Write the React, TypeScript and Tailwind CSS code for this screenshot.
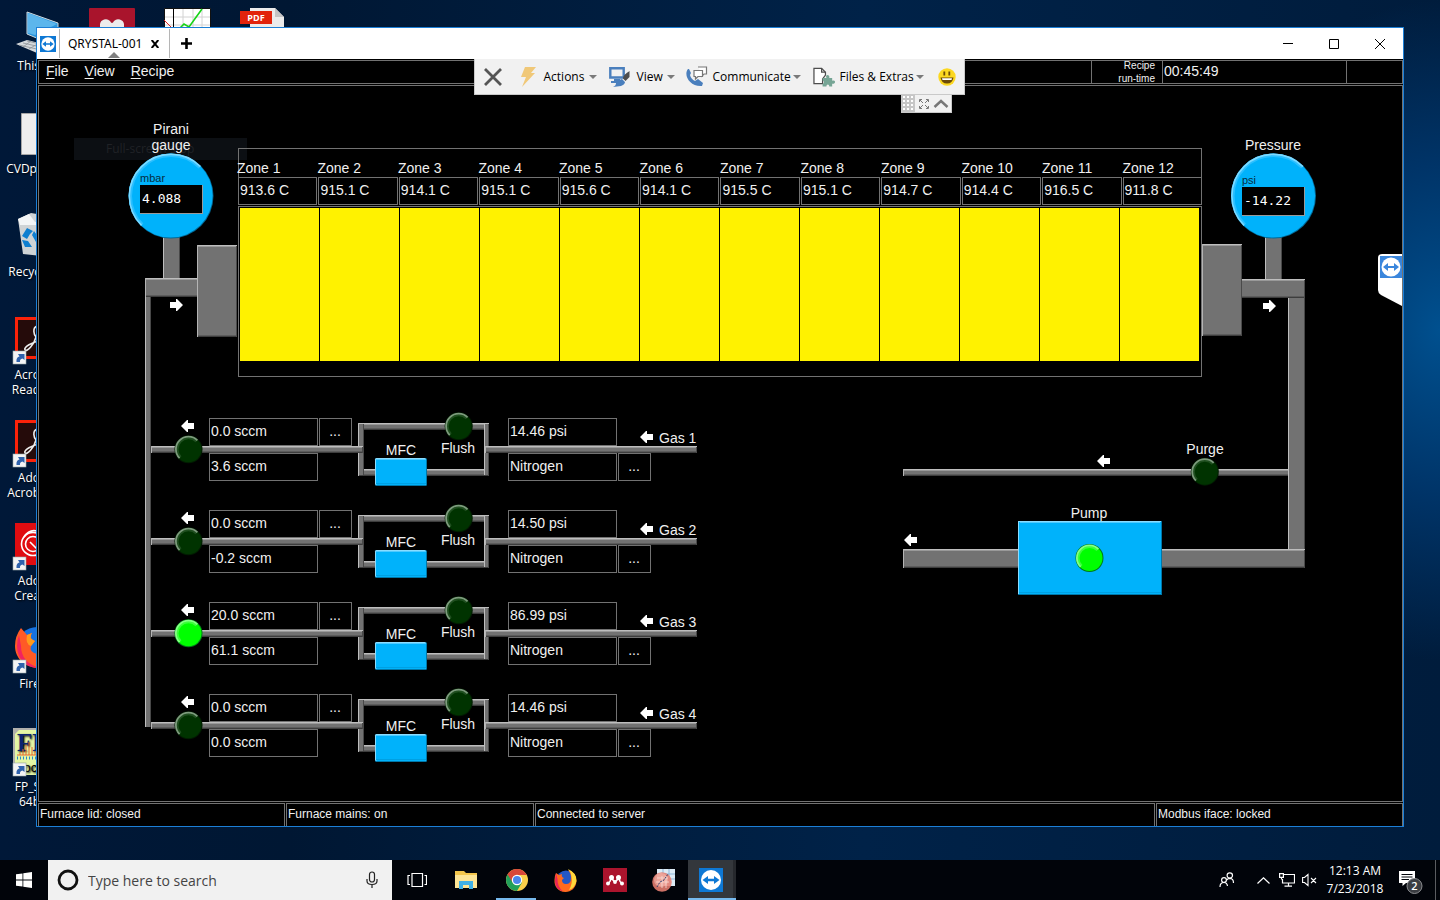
import React from "react";

const ui = "font-['Open_Sans','Noto_Sans',sans-serif]";

/* ---------- Mimic drawing primitives ---------- */

type Box = { x: number; y: number; w: number; h: number };

function Pipe({ x, y, w, h }: Box) {
  return (
    <g shapeRendering="crispEdges">
      <rect x={x} y={y} width={w} height={h} fill="#727272" />
      <rect x={x} y={y + h - 2} width={w} height={1} fill="#5c5c5c" />
      <rect x={x} y={y + h - 1} width={w} height={1} fill="#3d3d3d" />
      <rect x={x + w - 1} y={y} width={1} height={h} fill="#4a4a4a" />
      <rect x={x} y={y + 1} width={w - 1} height={1} fill="#999999" />
      <rect x={x} y={y} width={w} height={1} fill="#bebebe" />
      <rect x={x} y={y} width={1} height={h} fill="#b4b4b4" />
    </g>
  );
}

function Riser({ x, y, w, h }: Box) {
  return (
    <g shapeRendering="crispEdges">
      <rect x={x} y={y} width={w} height={h} fill="#727272" />
      <rect x={x} y={y} width={1} height={h} fill="#bebebe" />
      <rect x={x + w - 1} y={y} width={1} height={h} fill="#484848" />
    </g>
  );
}

function BluePanel({ x, y, w, h, r }: Box & { r: number }) {
  return (
    <g>
      <rect x={x} y={y} width={w} height={h} rx={r} fill="#0077a8" />
      <rect x={x} y={y} width={w - 1} height={h - 1} rx={r} fill="#8adcff" />
      <rect x={x + 1} y={y + 1} width={w - 2} height={h - 2} rx={r} fill="#00b2fb" />
      <rect x={x + 2} y={y + 1} width={w - 4} height={1} fill="#4fcaff" />
      <rect x={x + 1} y={y + h - 3} width={w - 2} height={1} fill="#00a0e2" />
    </g>
  );
}

/* Upper-left half of a circle's rim, from lower left to upper right. */
function Rim({ cx, cy, r, color, width }: { cx: number; cy: number; r: number; color: string; width: number }) {
  const k = r * Math.SQRT1_2;
  return (
    <path
      d={`M${cx - k} ${cy + k} A${r} ${r} 0 0 1 ${cx + k} ${cy - k}`}
      fill="none"
      stroke={color}
      strokeWidth={width}
    />
  );
}

function Lamp({ cx, cy, on = false }: { cx: number; cy: number; on?: boolean }) {
  return (
    <g>
      <circle cx={cx} cy={cy} r={14} fill={on ? "#007a18" : "#001c00"} />
      <circle cx={cx} cy={cy} r={13} fill={on ? "#00ff00" : "#003300"} />
      <Rim cx={cx} cy={cy} r={11} color={on ? "#3cff3c" : "#1f4f1f"} width={2} />
      <Rim cx={cx} cy={cy} r={12.6} color={on ? "#86ff86" : "#7d9a7d"} width={1.8} />
    </g>
  );
}

function Gauge({ cx, cy }: { cx: number; cy: number }) {
  return (
    <g>
      <circle cx={cx} cy={cy} r={42.5} fill="#006a98" />
      <circle cx={cx - 0.4} cy={cy - 0.4} r={42} fill="#00b2fb" />
      <Rim cx={cx} cy={cy} r={40} color="#2abfff" width={2} />
      <Rim cx={cx} cy={cy} r={41.6} color="#7ed9ff" width={1.6} />
    </g>
  );
}

function Arrow({ x, y, right = false }: { x: number; y: number; right?: boolean }) {
  const d = right
    ? `M${x} ${y + 3}h6v-3h1l6 6l-6 6h-1v-3h-6z`
    : `M${x + 13} ${y + 3}h-6v-3h-1l-6 6l6 6h1v-3h6z`;
  return <path d={d} fill="#ffffff" />;
}

/* ---------- Furnace ---------- */

const zones = [
  "913.6 C", "915.1 C", "914.1 C", "915.1 C", "915.6 C", "914.1 C",
  "915.5 C", "915.1 C", "914.7 C", "914.4 C", "916.5 C", "911.8 C",
];

function Furnace() {
  return (
    <section aria-label="Furnace" className="absolute left-[199px] top-[62px] flex h-[229px] w-[964px] flex-col">
      <div className="h-[29px] border-x border-t border-[#727272] pt-[11px]">
        <div className="-mx-[2px] grid grid-cols-12 leading-[17px]">
          {zones.map((_, i) => (
            <span key={i}>Zone {i + 1}</span>
          ))}
        </div>
      </div>
      <div className="mb-px grid h-7 grid-cols-12 gap-px">
        {zones.map((t, i) => (
          <output key={i} aria-label={`Zone ${i + 1}`} className="border border-[#727272] pl-px leading-[25px]">
            {t}
          </output>
        ))}
      </div>
      <div className="flex-1 border border-[#727272] px-px pt-px">
        <div className="grid h-[153px] grid-cols-12">
          {zones.map((_, i) => (
            <div key={i} className="border-r border-black bg-[#fff200]" />
          ))}
        </div>
      </div>
    </section>
  );
}

/* ---------- Gas lines ---------- */

type Gas = { name: string; set: string; flow: string; psi: string; open?: boolean };

const gases: Gas[] = [
  { name: "Gas 1", set: "0.0 sccm", flow: "3.6 sccm", psi: "14.46 psi" },
  { name: "Gas 2", set: "0.0 sccm", flow: "-0.2 sccm", psi: "14.50 psi" },
  { name: "Gas 3", set: "20.0 sccm", flow: "61.1 sccm", psi: "86.99 psi", open: true },
  { name: "Gas 4", set: "0.0 sccm", flow: "0.0 sccm", psi: "14.46 psi" },
];

const readField = "h-7 w-[109px] border border-[#727272] bg-black pl-px text-[14px] leading-[25px] text-[#f0f0f0]";
const editField = "h-7 w-[109px] border border-[#727272] bg-black pb-[2px] pl-px text-[14px] text-[#f0f0f0]";
const more = "h-7 w-[33px] border border-[#727272] bg-black pb-[2px] pr-px text-[14px] text-[#f0f0f0]";

function GasLine({ g }: { g: Gas }) {
  return (
    <section aria-label={g.name} className="relative h-[92px]">
      <div className="absolute left-16 top-2 grid gap-[7px]">
        <div className="flex gap-px">
          <input aria-label={`${g.name} set point`} className={editField} defaultValue={g.set} />
          <button className={more}>...</button>
        </div>
        <output aria-label={`${g.name} flow`} className={readField}>{g.flow}</output>
      </div>
      <div className="absolute left-[363px] top-2 grid gap-[7px]">
        <output aria-label={`${g.name} pressure`} className={readField}>{g.psi}</output>
        <div className="flex gap-px">
          <input aria-label={`${g.name} type`} className={editField} defaultValue="Nitrogen" />
          <button className={more}>...</button>
        </div>
      </div>
      <svg className="absolute left-0 top-0 h-[92px] w-[560px]" viewBox="145 410 560 92" aria-hidden="true">
        <Pipe x={358} y={423} w={131} h={7} />
        <Pipe x={358} y={469} w={131} h={7} />
        <Riser x={358} y={424} w={6} h={51} />
        <Riser x={484} y={424} w={5} h={51} />
        <Pipe x={151} y={446} w={212} h={7} />
        <Pipe x={485} y={446} w={212} h={7} />
        <BluePanel x={375} y={458} w={52} h={28} r={1.5} />
        <Lamp cx={458.7} cy={426.3} />
        <Lamp cx={188.5} cy={449.3} on={g.open} />
        <Arrow x={181} y={420} />
        <Arrow x={640} y={431} />
      </svg>
      <span className="absolute left-[230px] top-8 w-[52px] text-center leading-4">MFC</span>
      <span className="absolute left-[287px] top-[30px] w-[52px] text-center leading-4">Flush</span>
      <span className="absolute left-[514px] top-5 leading-4">{g.name}</span>
    </section>
  );
}

function Readout({ unit, value }: { unit: string; value: string }) {
  return (
    <label className="block w-[63px] text-[11px] leading-[13px] text-[#062c40]">
      {unit}
      <output className="block h-[29px] border-b border-r border-[#9a9a9a] bg-black pl-[2px] font-['DejaVu_Sans_Mono',monospace] text-[13px] leading-7 text-white">
        {value}
      </output>
    </label>
  );
}

function Mimic() {
  return (
    <main className="relative min-h-0 flex-1 overflow-hidden border border-[#727272] text-[14px] text-[#f0f0f0]">
      <div className="absolute left-[35px] top-[52px] h-[22px] w-[173px] bg-[#0c0f13] pl-8 text-[12px] leading-[22px] text-[#202226]">
        <span className={ui}>Full-screen stop</span>
      </div>
      <svg className="absolute left-0 top-0 h-[714px] w-[1363px]" viewBox="39 86 1363 714" aria-hidden="true">
        <Riser x={163} y={236} w={17} h={43} />
        <Gauge cx={171} cy={196} />
        <Riser x={145} y={296} w={6} h={431} />
        <Pipe x={145} y={278} w={53} h={19} />
        <Pipe x={197} y={245} w={40} h={92} />
        <Arrow x={170} y={299} right />
        <Riser x={1265} y={236} w={17} h={44} />
        <Gauge cx={1273.5} cy={196} />
        <Riser x={1288} y={297} w={17} h={253} />
        <Pipe x={1241} y={279} w={64} h={19} />
        <Pipe x={1202} y={244} w={40} h={92} />
        <Arrow x={1263} y={300} right />
        <Pipe x={903} y={469} w={386} h={7} />
        <Riser x={1288} y={460} w={17} h={90} />
        <Lamp cx={1204.8} cy={471.7} />
        <Arrow x={1097} y={455} />
        <Pipe x={903} y={549} w={402} h={19} />
        <BluePanel x={1018} y={521} w={144} h={74} r={0} />
        <Lamp cx={1089.5} cy={558} on />
        <Arrow x={904} y={534} />
      </svg>
      <p className="absolute left-[92px] top-[35px] w-20 text-center leading-4">
        Pirani
        <br />
        gauge
      </p>
      <div className="absolute left-[101px] top-[86px]">
        <Readout unit="mbar" value="4.088" />
      </div>
      <p className="absolute left-[1194px] top-[51px] w-20 text-center leading-4">Pressure</p>
      <div className="absolute left-[1203px] top-[88px]">
        <Readout unit="psi" value="-14.22" />
      </div>
      <Furnace />
      <div className="absolute left-[106px] top-[324px] w-[560px]">
        {gases.map((g) => (
          <GasLine key={g.name} g={g} />
        ))}
      </div>
      <p className="absolute left-[1126px] top-[355px] w-20 text-center leading-4">Purge</p>
      <p className="absolute left-[1010px] top-[419px] w-20 text-center leading-4">Pump</p>
      <button aria-label="Panel" className="absolute right-0 top-[168px] h-[52px] w-6">
        <svg className="h-[52px] w-6" viewBox="0 0 24 52">
          <path d="M4 0H24V52L3 41Q0 39 0 36V4Q0 0 4 0Z" fill="#fff" />
          <rect x="2" y="2" width="22" height="22" fill="#3a86dc" />
          <circle cx="13" cy="13" r="9.5" fill="#fff" />
          <path d="M5 13l5-4v3h6V9l5 4l-5 4v-3h-6v3z" fill="#3a86dc" />
        </svg>
      </button>
    </main>
  );
}

/* ---------- Remote session toolbar ---------- */

function Caret() {
  return (
    <svg className="h-1 w-2" viewBox="0 0 8 4">
      <path d="M0 0h8l-4 4z" fill="#7a7a7a" />
    </svg>
  );
}

function RemoteToolbar() {
  const item = "flex items-center text-[12px] text-black";
  return (
    <div className={`absolute inset-x-0 top-[31px] z-10 flex justify-center pr-[2px] ${ui}`}>
      <div className="relative flex h-9 w-[491px] items-center border border-t-0 border-[#c9c9c9] bg-[#f1f1f1] pl-[9px]">
        <button aria-label="Close session" className="mr-[18px]">
          <svg className="h-[18px] w-[18px]" viewBox="0 0 18 18">
            <path d="M1 1L17 17M17 1L1 17" stroke="#555" strokeWidth="2.8" />
          </svg>
        </button>
        <button className={item}>
          <svg className="mr-[7px] h-5 w-[17px]" viewBox="0 0 17 20">
            <path d="M5 0H16L11 6H15L2 20L6 10H1Z" fill="#f0c878" />
          </svg>
          <span className="w-[45px] text-left">Actions</span>
          <Caret />
        </button>
        <button className={`${item} ml-3`}>
          <svg className="mr-[7px] h-5 w-[21px]" viewBox="0 0 21 20">
            <path d="M1.300 1.300H14.700V10.500H1.300Z" fill="none" stroke="#4a7fbd" strokeWidth="2.400" />
            <path d="M5 12h6v2H5z" fill="#4a7fbd" />
            <path d="M2 14h5l6-2l3 3c0 2-2 3-4 4l-8 1c2-1 3-2 3-4H2z" fill="#4a7fbd" />
            <path d="M20.500 4v6l-4 4-2.500-2.500c0-3 3-5 6.500-7.500z" fill="#4d4d4d" />
          </svg>
          <span className="w-[30px] text-left">View</span>
          <Caret />
        </button>
        <button className={`${item} ml-[10px]`}>
          <svg className="mr-[5px] h-[21px] w-[23px]" viewBox="0 0 23 21">
            <path d="M3 3C-2 9 5 21 17 20L18 17L13 13L10 15Q6 13 5 9L6 7L4 3Z" fill="#4a7fbd" />
            <path d="M13 1H21.5V8H19L17 10V8" fill="#fff" stroke="#777" strokeWidth="1.2" />
            <path d="M9 4.5H17.500V10.500H13L10.500 13V10.500H9Z" fill="#fff" stroke="#777" strokeWidth="1.2" />
          </svg>
          <span className="w-20 text-left">Communicate</span>
          <Caret />
        </button>
        <button className={`${item} ml-3`}>
          <svg className="mr-1 h-5 w-[23px]" viewBox="0 0 24 20">
            <path d="M1 1H9L13 5V8L10 12V17H1Z" fill="#fff" stroke="#4d4d4d" strokeWidth="1.3" />
            <path d="M9 1V5H13" fill="none" stroke="#4d4d4d" strokeWidth="1.3" />
            <path d="M10 11h4c-2-4 4-4 3 0h3v3c4-2 4 4 0 3v3h-3c0-3-3-3-3 0h-4v-3c2 0 2-3 0-3z" fill="#76a595" />
          </svg>
          <span className="w-[76px] whitespace-nowrap text-left">Files &amp; Extras</span>
          <Caret />
        </button>
        <button aria-label="Feedback" className="ml-[14px]">
          <svg className="h-[18px] w-[18px]" viewBox="0 0 18 18">
            <circle cx="9" cy="9" r="8.700" fill="#fcd820" />
            <path d="M6.300 3.500v4M11.300 3.500v4" stroke="#6b4a08" strokeWidth="1.800" />
            <path d="M2.500 9.500H15.500Q14.500 15.500 9 15.500Q3.500 15.500 2.500 9.500Z" fill="#6b4a08" />
            <path d="M4 10.300H14L13.500 12H4.500Z" fill="#fff" />
          </svg>
        </button>
        <div className="absolute right-3 top-9 flex h-[18px] w-[51px] items-center justify-between border border-t-0 border-[#c9c9c9] bg-[#f1f1f1] pr-[2px]">
          <svg className="h-[17px] w-[13px]" viewBox="0 0 13 17">
            <path d="M0 0H13V17H0Z" fill="#c6c6c6" />
            <path d="M1 2h12M1 6h12M1 10h12M1 14h12" stroke="#fff" strokeWidth="2" strokeDasharray="2 2" />
          </svg>
          <svg className="h-[10px] w-[10px]" viewBox="0 0 10 10" fill="none" stroke="#777">
            <path d="M.5 3V.5H3M7 .5H9.500V3M9.500 7V9.500H7M3 9.500H.5V7M1 1L4 4M9 1L6 4M1 9L4 6M9 9L6 6" />
          </svg>
          <svg className="h-[9px] w-4" viewBox="0 0 16 9">
            <path d="M1.500 8L8 2L14.500 8" fill="none" stroke="#777" strokeWidth="2.400" />
          </svg>
        </div>
      </div>
    </div>
  );
}

function ViewerLogo({ className }: { className: string }) {
  return (
    <svg className={className} viewBox="0 0 24 24">
      <rect width="24" height="24" fill="#0e78d4" />
      <circle cx="12" cy="12" r="10" fill="#fff" />
      <path d="M3.500 12L9 8V10.800H15V8L20.500 12L15 16V13.200H9V16Z" fill="#0e78d4" />
    </svg>
  );
}

function AppWindow() {
  return (
    <div className="absolute inset-x-9 bottom-[33px] top-[27px] flex flex-col border border-[#1c7fd6] bg-black font-['Liberation_Sans',Arial,sans-serif]">
      <div className={`flex h-[31px] shrink-0 items-center bg-white text-[12px] text-black ${ui}`}>
        <ViewerLogo className="ml-[3px] h-4 w-4" />
        <div className="relative ml-[3px] flex h-[29px] w-[111px] items-center border-x border-[#b5b5b5] pl-2">
          <span className="w-[74px] whitespace-nowrap font-['Noto_Sans',sans-serif] leading-4">QRYSTAL-001</span>
          <button aria-label="Close tab" className="ml-[9px]">
            <svg className="h-2 w-2" viewBox="0 0 8 8">
              <path d="M.7 0L7.300 8M7.300 0L.7 8" stroke="#000" strokeWidth="2" />
            </svg>
          </button>
          <svg className="absolute bottom-0 left-12 h-[6px] w-3" viewBox="0 0 12 6">
            <path d="M0 6L6 0L12 6Z" fill="#808080" />
          </svg>
        </div>
        <button aria-label="New tab" className="ml-[11px]">
          <svg className="h-[11px] w-[11px]" viewBox="0 0 11 11">
            <path d="M5.500 0V11M0 5.500H11" stroke="#000" strokeWidth="2.600" />
          </svg>
        </button>
        <div className="ml-auto flex items-center gap-9 pr-[18px]">
          <button aria-label="Minimize">
            <svg className="h-[10px] w-[10px]" viewBox="0 0 10 10"><path d="M0 4.500H10" stroke="#000" /></svg>
          </button>
          <button aria-label="Maximize">
            <svg className="h-[10px] w-[10px]" viewBox="0 0 10 10"><path d="M.5 .5H9.500V9.500H.5Z" fill="none" stroke="#000" /></svg>
          </button>
          <button aria-label="Close">
            <svg className="h-[10px] w-[10px]" viewBox="0 0 10 10"><path d="M0 0L10 10M10 0L0 10" stroke="#000" /></svg>
          </button>
        </div>
      </div>

      <RemoteToolbar />

      <div className="flex min-h-0 flex-1 flex-col gap-px pl-px pt-px">
        <header className="flex h-6 shrink-0 border border-[#727272] text-[14px] leading-[21px] text-[#f0f0f0]">
          <nav className="flex gap-4 pb-[2px] pl-[7px]">
            <button><span className="underline underline-offset-2">F</span>ile</button>
            <button><span className="underline underline-offset-2">V</span>iew</button>
            <button><span className="underline underline-offset-2">R</span>ecipe</button>
          </nav>
          <span className="ml-auto w-[71px] border-l border-[#727272] pr-[7px] text-right text-[10px] leading-[13px]">
            <span className="-mt-[2px] block">
              Recipe
              <br />
              run-time
            </span>
          </span>
          <output aria-label="Recipe run-time" className="w-[184px] border-l border-[#727272] pl-px">00:45:49</output>
          <span className="w-[56px] border-l border-[#727272]" />
        </header>
        <Mimic />
        <footer className="flex h-[23px] shrink-0 gap-px text-[12px] leading-[21px] text-[#f0f0f0]">
          <span className="w-[247px] border border-b-0 border-[#727272] pl-px">Furnace lid: closed</span>
          <span className="w-[248px] border border-b-0 border-[#727272] pl-px">Furnace mains: on</span>
          <span className="flex-1 border border-b-0 border-[#727272] pl-px">Connected to server</span>
          <span className="w-[247px] border border-b-0 border-[#727272] pl-px">Modbus iface: locked</span>
        </footer>
      </div>
    </div>
  );
}

/* ---------- Desktop ---------- */

function Shortcut() {
  return (
    <g>
      <rect x="-2" y="34" width="13" height="13" fill="#f4f4f4" stroke="#9aa" strokeWidth=".6" />
      <path d="M1.500 45Q1 40 4.500 39.500L3 37H9.500V43L7.500 41.500Q4.500 42 5 45Z" fill="#2f62ac" />
    </g>
  );
}

function AcrobatArt() {
  return (
    <g>
      <path d="M1.500 1.500H46V40.500H1.500Z" fill="#250b0a" stroke="#fb2209" strokeWidth="3" />
      <path d="M22 9C17 11 19 18 21 20C19 28 12 35 10 33C8 30 18 25 24 24" fill="none" stroke="#eee" strokeWidth="1.600" />
      <Shortcut />
    </g>
  );
}

const desktopIcons: { label: string[]; art: React.ReactNode }[] = [
  {
    label: ["This"],
    art: (
      <g>
        <path d="M12 4L43 15V39L12 26Z" fill="#2a95dc" stroke="#cfd8dd" />
        <path d="M13 5L42 16L20 27L13 25Z" fill="#5cb6ec" />
        <path d="M1 36L12 32L36 38L22 45Z" fill="#d6dadd" />
        <path d="M4 37L26 42M8 35L30 40M12 33L34 38M8 39L16 33M14 41L24 35" stroke="#8b9196" strokeWidth=".8" />
      </g>
    ),
  },
  { label: ["CVDpl"], art: <path d="M6.500 2.500H40V43.500H6.500Z" fill="#eeeeee" stroke="#a5a5a5" /> },
  {
    label: ["Recyc"],
    art: (
      <g>
        <path d="M3 5L16 -1L40 3L36 43L8 40Z" fill="#cfd3d5" />
        <path d="M3 5L14 0L20 8L40 4L36 11H5Z" fill="#f3f5f6" />
        <path d="M7 22L12 14L18 17L15 20L12 25ZM7 26L13 27L17 33H10ZM19 17L24 24L21 28L17 21Z" fill="#0f7fd0" />
      </g>
    ),
  },
  { label: ["Acro", "Read"], art: <AcrobatArt /> },
  { label: ["Ado", "Acrob"], art: <AcrobatArt /> },
  {
    label: ["Ado", "Crea"],
    art: (
      <g>
        <path d="M0 0H46V42H0Z" fill="#e00c10" />
        <circle cx="18" cy="21" r="11.500" fill="none" stroke="#fff" strokeWidth="1.600" />
        <circle cx="18" cy="21" r="7.500" fill="none" stroke="#fff" strokeWidth="1.600" />
        <path d="M9 14Q14 6 22 8M15 19L22 26" fill="none" stroke="#fff" strokeWidth="1.600" />
        <Shortcut />
      </g>
    ),
  },
  {
    label: ["Fire"],
    art: (
      <g>
        <circle cx="22" cy="21" r="20" fill="#1672e0" />
        <path d="M6 2L12 9L17 7Q13 12 20 15L16 20Q14 26 22 28L30 26V42C10 44 0 32 0 20Q0 10 6 2Z" fill="#ff5a26" />
        <path d="M4 9Q0 20 4 30Q10 42 24 42Q6 36 6 20Z" fill="#f2245f" />
        <path d="M12 9L17 7Q13 12 20 15L16 20Q10 18 12 9Z" fill="#ff9a1c" />
        <Shortcut />
      </g>
    ),
  },
  {
    label: ["FP_S", "64b"],
    art: (
      <g>
        <path d="M-2 -1H46V46H-2Z" fill="#b0b0ac" />
        <path d="M4 1H46V46H0V5Z" fill="#e4f7a4" />
        <text x="2" y="22" fontFamily="Liberation Serif" fontWeight="bold" fontSize="25" fill="#0c2470">FP</text>
        <path d="M2 26H40M5 26V23M8 26V20M11 26V16M14 26V13M17 26V18M20 26V22" stroke="#e8662c" />
        <path d="M2 29H40" stroke="#2d8ac8" strokeWidth="3" strokeDasharray="1 2" />
        <text x="2" y="43" fontFamily="Liberation Sans" fontSize="13" fill="#000">Toc</text>
        <Shortcut />
      </g>
    ),
  },
];

function Desktop() {
  return (
    <div className="relative min-h-0 flex-1">
      <ul className={`absolute left-0 top-1 text-[12px] leading-[15px] text-white [text-shadow:1px_1px_2px_#000] ${ui}`}>
        {desktopIcons.map((d, i) => (
          <li key={i} className="h-[103px] w-10 pt-1">
            <svg className="ml-[15px] h-12 w-12 overflow-visible" viewBox="0 0 48 48">{d.art}</svg>
            <div className="flex flex-col items-end pt-[2px]">
              {d.label.map((l) => (
                <span key={l}>{l}</span>
              ))}
            </div>
          </li>
        ))}
      </ul>
      <div className="absolute left-[89px] top-2 flex gap-[29px]">
        <svg className="h-[46px] w-[46px]" viewBox="0 0 46 46">
          <rect width="46" height="46" rx="1" fill="#a9142c" />
          <path d="M11 19V16A6 6 0 0 1 21 13Q23 17 25 13A6 6 0 0 1 35 16V19Z" fill="#ececec" />
        </svg>
        <svg className="h-[46px] w-[47px]" viewBox="0 0 47 46">
          <path d="M.5 .5H46.500V45H.5Z" fill="#fff" stroke="#111" />
          <path d="M1 9H46M1 17H46M19 1V45M29 1V45M38 1V45" stroke="#d2d2d2" />
          <path d="M9.500 1V45" stroke="#000" />
          <path d="M0 12L8 20" stroke="#e02020" />
          <path d="M14 22L20 16L25 19L38 1" fill="none" stroke="#16d416" strokeWidth="1.600" />
        </svg>
        <svg className="h-[46px] w-[46px]" viewBox="0 0 46 46">
          <path d="M10 0H35L44 9V46H10Z" fill="#ebebeb" />
          <path d="M35 0V9H44Z" fill="#c4c4c4" />
          <rect x="0" y="3" width="32" height="13" fill="#e2230b" />
          <text x="16" y="13" textAnchor="middle" fontFamily="Open Sans" fontWeight="bold" fontSize="9" fill="#fff">PDF</text>
        </svg>
      </div>
      <AppWindow />
    </div>
  );
}

/* ---------- Taskbar ---------- */

const slot = "flex h-10 w-[49px] items-center justify-center";

function Taskbar() {
  return (
    <footer className={`flex h-10 shrink-0 bg-[#01040a] text-white ${ui}`}>
      <button aria-label="Start" className="flex w-12 items-center justify-center">
        <svg className="h-4 w-4" viewBox="0 0 16 16" fill="#fff">
          <path d="M0 2.300L6.500 1.400V7.600H0ZM7.300 1.300L16 0V7.600H7.300ZM0 8.400H6.500V14.600L0 13.700ZM7.300 8.400H16V16L7.300 14.700Z" />
        </svg>
      </button>
      <label className="flex w-[344px] items-center bg-[#f1f1f1] pl-[9px] pr-[14px]">
        <svg className="h-[22px] w-[22px]" viewBox="0 0 22 22">
          <circle cx="11" cy="11" r="9" fill="none" stroke="#111" strokeWidth="2.800" />
        </svg>
        <input
          aria-label="Search"
          placeholder="Type here to search"
          className="ml-[9px] min-w-0 flex-1 bg-transparent text-[14px] text-[#333] outline-none placeholder:text-[#444]"
        />
        <svg className="h-[18px] w-3" viewBox="0 0 12 18" fill="none" stroke="#222" strokeWidth="1.200">
          <rect x="3.500" y="1" width="5" height="10" rx="2.500" />
          <path d="M1 8V10Q1 13.500 6 13.500Q11 13.500 11 10V8M6 13.500V17" />
        </svg>
      </label>
      <button aria-label="Task view" className={slot}>
        <svg className="h-4 w-5" viewBox="0 0 20 16" fill="none" stroke="#fff" strokeWidth="1.200">
          <path d="M5 1.500H15.500V14.500H5ZM3 3.500H1V12.500H3M17.500 3.500H19.500V12.500H17.500" />
        </svg>
      </button>
      <button aria-label="File Explorer" className={slot}>
        <svg className="h-[18px] w-[22px]" viewBox="0 0 22 18">
          <path d="M0 0H9L11 2H22V17H0Z" fill="#f3c64c" />
          <path d="M0 4H22V17H0Z" fill="#fde596" />
          <path d="M4 18V10H18V18H14V14H8V18Z" fill="#3fb0e6" />
        </svg>
      </button>
      <button aria-label="Chrome" className={`${slot} relative ml-[2px]`}>
        <svg className="h-[22px] w-[22px]" viewBox="0 0 22 22">
          <circle cx="11" cy="11" r="11" fill="#fbd04a" />
          <path d="M11 11L1.500 5.500A11 11 0 0 0 11 22L16 13.500Z" fill="#21a05a" />
          <path d="M11 6H20.800L20.500 5.500A11 11 0 0 0 1.500 5.500L6.700 13.500Z" fill="#d9473a" />
          <circle cx="11" cy="11" r="5.200" fill="#fff" />
          <circle cx="11" cy="11" r="4" fill="#4a86ee" />
        </svg>
        <span className="absolute bottom-0 left-1 h-[2px] w-10 bg-[#76b9ed]" />
      </button>
      <button aria-label="Firefox" className={slot}>
        <svg className="h-[23px] w-[23px]" viewBox="0 0 23 23">
          <circle cx="12" cy="11" r="9.500" fill="#2457c5" />
          <path d="M2 4L5 6L8 5Q7 8 10 9L8 11Q8 15 12 15Q17 15 17 9Q17 4 14 1Q22 3 22.500 12C22 19 17 23 11.500 23C4 23 0 17 .5 11Q.8 6 2 4Z" fill="#ff6a1f" />
          <path d="M14 0Q23 4 22.500 12Q21 19 15 21Q19 14 17.500 8Q17 3 14 0Z" fill="#ffd83a" />
          <path d="M2 4L1 12Q1 20 9 22.500Q3 17 3.500 10Z" fill="#ea2358" />
        </svg>
      </button>
      <button aria-label="Mendeley" className={slot}>
        <svg className="h-6 w-6" viewBox="0 0 24 24">
          <rect width="24" height="24" fill="#ab142d" />
          <path d="M5 16Q8 13 8 10L12 14L16 10Q16 13 19 16" fill="none" stroke="#fff" strokeWidth="1.600" />
          <g fill="#fff">
            <circle cx="8.500" cy="9.500" r="2.500" /><circle cx="15.500" cy="9.500" r="2.500" /><circle cx="12" cy="14" r="1.900" />
            <circle cx="5" cy="15.500" r="2" /><circle cx="19" cy="15.500" r="2" />
          </g>
        </svg>
      </button>
      <button aria-label="Data plot" className={slot}>
        <svg className="h-[23px] w-[23px]" viewBox="0 0 23 23">
          <path d="M5 0H23V17H5Z" fill="#dcebf6" />
          <path d="M5 5H23M5 10H23M11 0V17M17 0V17" stroke="#8fb6d8" />
          <circle cx="10" cy="13" r="9.800" fill="#e88072" fillOpacity=".88" />
          <circle cx="9" cy="11" r="7" fill="#f4b8ae" fillOpacity=".6" />
          <path d="M5 9H16M4 13H17M10 7V19M14 7V19" stroke="#f9dcd6" strokeWidth=".8" />
          <path d="M5 18L8 13L12 11L16 5" fill="none" stroke="#34406e" strokeDasharray="2 1" />
        </svg>
      </button>
      <button aria-label="Remote session" className="relative flex w-12 items-center justify-center border-r-[3px] border-[#25282d] bg-[#33373c]">
        <ViewerLogo className="h-6 w-6" />
        <span className="absolute -right-[3px] bottom-0 left-0 h-[2px] bg-[#76b9ed]" />
      </button>

      <div className="ml-auto flex items-center">
        <svg className="mr-[22px] h-4 w-4" viewBox="0 0 16 16" fill="none" stroke="#fff" strokeWidth="1.200">
          <circle cx="5" cy="8" r="2.400" /><circle cx="10.800" cy="3.500" r="2.700" />
          <path d="M1 15Q1 10.500 5 10.500Q8 10.500 8.500 14M7.500 8Q9 6.300 11 6.300Q14.500 6.500 14.500 11" />
        </svg>
        <svg className="mr-[9px] h-[7px] w-[13px]" viewBox="0 0 13 7" fill="none" stroke="#fff" strokeWidth="1.200">
          <path d="M.5 6.500L6.500 .8L12.500 6.500" />
        </svg>
        <svg className="mr-[7px] h-[14px] w-4" viewBox="0 0 16 14" fill="none" stroke="#fff" strokeWidth="1.200">
          <path d="M5 1.500H15.500V10H3.500V6M9.500 10V13M5.500 13.200H13M.6 .6H4.400V4.400H.6ZM2.500 4.400V6.500" />
        </svg>
        <svg className="mr-[11px] h-[14px] w-[15px]" viewBox="0 0 15 14" fill="none" stroke="#fff" strokeWidth="1.100">
          <path d="M.6 4.500H2.500L6 1.500V12.500L2.500 9.500H.6ZM9 5L14 10M14 5L9 10" />
        </svg>
        <div className="w-[54px] whitespace-nowrap text-center text-[12px] leading-[18px]">
          <div>12:13 AM</div>
          <div className="-mx-1">7/23/2018</div>
        </div>
        <button aria-label="Notifications" className="ml-[17px] mr-3 h-7 w-6">
          <svg className="h-7 w-6" viewBox="0 0 24 28">
            <path d="M0 5H16V17H7L3.500 20V17H0Z" fill="#fff" />
            <path d="M2.500 8.500H13.500M2.500 11H13.500M2.500 13.500H10" stroke="#01040a" />
            <circle cx="15.500" cy="20" r="7.500" fill="#3a3d42" stroke="#8b8d90" />
            <text x="15.500" y="24" textAnchor="middle" fontFamily="Open Sans" fontWeight="600" fontSize="11" fill="#fff">2</text>
          </svg>
        </button>
        <span className="mr-1 h-10 w-px bg-[#5a5c60]" />
      </div>
    </footer>
  );
}

export default function App() {
  return (
    <div className="flex h-screen flex-col overflow-hidden bg-[#001b3c] bg-[radial-gradient(ellipse_240px_330px_at_100%_330px,#00508f_0%,#003468_50%,transparent_100%),linear-gradient(90deg,#001838_0%,#001733_20%,#002248_60%,#001c3c_100%)]">
      <Desktop />
      <Taskbar />
    </div>
  );
}
